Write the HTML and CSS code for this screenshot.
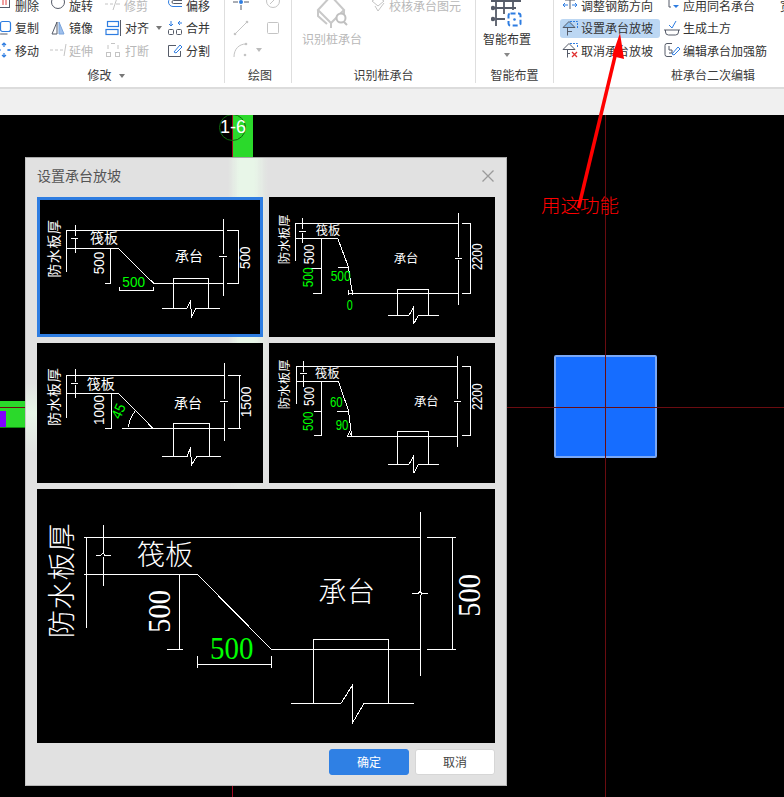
FILE: index.html
```html
<!DOCTYPE html>
<html lang="zh-CN">
<head>
<meta charset="utf-8">
<title>设置承台放坡</title>
<link rel="stylesheet" href="styles.css">
</head>
<body>
<div class="app">
  <header class="ribbon">
    <section class="group g-edit">
      <div class="tools">
        <div class="tool"><svg class="ic" viewBox="0 0 16 16"><rect x="2.5" y="-1.5" width="11" height="12" fill="none" stroke="#555b68"/><path d="M7 2v6M10 2v6" stroke="#e04040" fill="none"/></svg><span>删除</span></div>
        <div class="tool"><svg class="ic" viewBox="0 0 16 16"><circle cx="8" cy="5" r="6.5" fill="none" stroke="#555b68"/></svg><span>旋转</span></div>
        <div class="tool off"><svg class="ic" viewBox="0 0 16 16"><path d="M0 7h3M5 7h3M11 7h4M12 1 8 13" fill="none" stroke="#c4c4c4"/></svg><span>修剪</span></div>
        <div class="tool"><svg class="ic" viewBox="0 0 16 16"><path d="M15 .5H6a4.500 4.500 0 0 0 0 9h9" fill="none" stroke="#2e7de1"/><path d="M15 3.500H6.500a1.500 1.500 0 0 0 0 3H15" fill="none" stroke="#555b68"/></svg><span>偏移</span></div>

        <div class="tool"><svg class="ic" viewBox="0 0 16 16"><rect x="4.500" y="1.500" width="10" height="10" rx="2" fill="none" stroke="#2e7de1" stroke-width="1.200"/><path d="M2.500 5v7a2 2 0 0 0 2 2h7" fill="none" stroke="#555b68"/></svg><span>复制</span></div>
        <div class="tool"><svg class="ic" viewBox="0 0 16 16"><path d="M7 2 2 14h5z" fill="none" stroke="#555b68"/><path d="M9 2l5 12H9z" fill="#9fc0ec" stroke="#7aa4dc"/></svg><span>镜像</span></div>
        <div class="tool"><svg class="ic tight" viewBox="0 0 16 16"><rect x="2.500" y="1.500" width="11" height="5" fill="none" stroke="#2e7de1" stroke-width="1.200"/><rect x="1" y="9.500" width="12" height="5" fill="none" stroke="#2e7de1" stroke-width="1.200"/><path d="M15.500 0v16" stroke="#555b68"/></svg><span>对齐</span><i class="caret caret-near"></i></div>
        <div class="tool"><svg class="ic" viewBox="0 0 16 16"><path d="M4 1v5M2 4l2 2 2-2M11 3h4M11 3l2-2M11 3l2 2" fill="none" stroke="#2e7de1"/><rect x="1.500" y="9.500" width="5" height="5" rx="1" fill="none" stroke="#555b68"/><rect x="9.500" y="9.500" width="5" height="5" rx="1" fill="none" stroke="#555b68"/></svg><span>合并</span></div>

        <div class="tool"><svg class="ic" viewBox="0 0 16 16"><path d="M8 1v4M8 11v4M1 8h4M11 8h4M6 3l2-2 2 2M6 13l2 2 2-2" fill="none" stroke="#2e7de1" stroke-width="1.200"/><circle cx="3" cy="8" r="1" fill="#2e7de1"/><circle cx="13" cy="8" r="1" fill="#2e7de1"/></svg><span>移动</span></div>
        <div class="tool off"><svg class="ic" viewBox="0 0 16 16"><path d="M0 8h3M5 8h3M10 8h3M16 2l-2 12" fill="none" stroke="#c4c4c4"/></svg><span>延伸</span></div>
        <div class="tool off"><svg class="ic" viewBox="0 0 16 16"><path d="M3 3v4M13 3v4M6 1.500h4" fill="none" stroke="#c4c4c4"/><rect x="1.500" y="10.500" width="4" height="4" fill="none" stroke="#c4c4c4"/><rect x="10.500" y="10.500" width="4" height="4" fill="none" stroke="#c4c4c4"/></svg><span class="far">打断</span></div>
        <div class="tool"><svg class="ic" viewBox="0 0 16 16"><path d="M9 3.500H1.500v11h12V9" fill="none" stroke="#555b68"/><path d="M7 10 13 3l2 2-6 6z" fill="none" stroke="#2e7de1"/></svg><span>分割</span></div>
      </div>
      <div class="group-label label-edit">修改<i class="caret"></i></div>
    </section>

    <section class="group g-draw">
      <div class="tools">
        <div class="tool"><svg class="ic" viewBox="0 0 16 16"><path d="M0 5h5M11 5h5M8 -2v4M8 8v5" fill="none" stroke="#555b68"/><circle cx="8" cy="5" r="2" fill="#2e7de1"/></svg></div>
        <div class="tool"><svg class="ic" viewBox="0 0 16 16"><circle cx="8" cy="4" r="6.500" fill="none" stroke="#c4c4c4"/><path d="M5 7l6-6" stroke="#c4c4c4"/></svg></div>
        <div class="tool"><svg class="ic" viewBox="0 0 16 16"><path d="M2 14 14 2" stroke="#c4c4c4"/><circle cx="2" cy="14" r="1.300" fill="#c4c4c4"/><circle cx="14" cy="2" r="1.300" fill="#c4c4c4"/></svg></div>
        <div class="tool"><svg class="ic" viewBox="0 0 16 16"><rect x="2.500" y="2.500" width="11" height="11" rx="1" fill="none" stroke="#c4c4c4"/></svg></div>
        <div class="tool tool-wide"><svg class="ic" viewBox="0 0 16 16"><path d="M1 15C1 7 6 2 13 2" fill="none" stroke="#c4c4c4"/><circle cx="13" cy="2" r="1.300" fill="#c4c4c4"/><circle cx="12" cy="13" r="1.300" fill="#c4c4c4"/></svg><i class="caret caret-off"></i></div>
      </div>
      <div class="group-label label-draw">绘图</div>
    </section>

    <section class="group g-detect">
      <div class="detect-row">
        <div class="big off">
          <svg class="big-ic" viewBox="0 0 32 30"><path d="M2 12 15 -2l13 14-13 13zM2 12v6l9 8M15 25v5M28 12v4" fill="none" stroke="#c8c8c8" stroke-width="2"/><circle cx="25" cy="20" r="4.500" fill="#fff" stroke="#c0c0c0" stroke-width="2"/><path d="M28 24l3 3" stroke="#c0c0c0" stroke-width="2"/></svg>
          <span>识别桩承台</span>
        </div>
        <div class="tool off check-tool"><svg class="ic" viewBox="0 0 16 16"><path d="M2 4 8 0l6 4-6 5zM5 9l3 5 6-8" fill="none" stroke="#c4c4c4"/></svg><span>校核承台图元</span></div>
      </div>
      <div class="group-label">识别桩承台</div>
    </section>

    <section class="group g-smart">
      <div class="big smart">
        <svg class="big-ic" viewBox="0 0 32 30"><path d="M5 0v28M5 21h9M13 0v16M0 10h25M22 0v12M0 3h30" fill="none" stroke="#555b68" stroke-width="1.800" /><circle cx="2" cy="10" r="2.200" fill="#555b68"/><circle cx="2" cy="21" r="2.200" fill="#555b68"/><rect x="17.500" y="15.500" width="12" height="12" rx="2" fill="#fff" stroke="#2e7de1" stroke-width="2" stroke-dasharray="5 2.500"/><circle cx="23.500" cy="21.500" r="1.300" fill="#2e7de1"/></svg>
        <span>智能布置</span>
        <i class="caret smart-caret"></i>
      </div>
      <div class="group-label">智能布置</div>
    </section>

    <section class="group g-cap">
      <div class="tools">
        <div class="tool"><svg class="ic" viewBox="0 0 16 16"><path d="M3 3V1M13 3V1M8 0v12M3 3h10" fill="none" stroke="#555b68"/><path d="M1 8h5M10 8h5M3 6 1 8l2 2M13 6l2 2-2 2" fill="none" stroke="#2e7de1"/></svg><span>调整钢筋方向</span></div>
        <div class="tool"><svg class="ic" viewBox="0 0 16 16"><path d="M1 1h14M5 1v9h2" fill="none" stroke="#555b68"/><path d="M9 8h6l-3 3z" fill="#2e7de1"/></svg><span>应用同名承台</span></div>
        <div class="tool"><svg class="ic" viewBox="0 0 16 16"><path d="M8 1.500H15.500V8" fill="none" stroke="#2e7de1" stroke-dasharray="2 1"/><path d="M1 7.500 7 1.500l6 6z" fill="#8fc0ef" stroke="#555b68"/><path d="M5.500 7.500V15.500M5.500 11.500H10" fill="none" stroke="#555b68"/></svg><span>设置承台放坡</span></div>
        <div class="tool"><svg class="ic" viewBox="0 0 16 16"><path d="M1.500 10v2a3 3 0 0 0 3 3h7a3 3 0 0 0 3-3v-2M0 10h16" fill="none" stroke="#555b68"/><path d="M5 5l3 3 4-7" fill="none" stroke="#2e7de1"/></svg><span>生成土方</span></div>
        <div class="tool"><svg class="ic" viewBox="0 0 16 16"><path d="M8 1.500H15.500V6" fill="none" stroke="#2e7de1" stroke-dasharray="2 1"/><path d="M1 7.500 7 1.500l6 6zM5.500 7.500V15.500M5.500 11.500H8" fill="none" stroke="#555b68"/><path d="M10 10l5 5M15 10l-5 5" stroke="#e03030" stroke-width="1.300"/></svg><span>取消承台放坡</span></div>
        <div class="tool"><svg class="ic" viewBox="0 0 16 16"><path d="M8 1.500H3a2 2 0 0 0-2 2v9a2 2 0 0 0 2 2h5M5 4v4h3v3H5" fill="none" stroke="#555b68"/><path d="M8 12 14 5l2 2-6 6z" fill="none" stroke="#2e7de1"/></svg><span>编辑承台加强筋</span></div>
        <div class="tool tool-clip"><span>宽</span></div>
      </div>
      <div class="group-label label-cap">桩承台二次编辑</div>
    </section>
  </header>

  <div class="strip"></div>

  <main class="canvas">
    <div class="stripe-top"></div>
    <div class="v-line"></div>
    <div class="axis-badge">1-6</div>
    <div class="stripe-left"><div class="stripe-purple"></div></div>
    <div class="pile-cap"></div>
    <div class="cross-h"></div>
    <div class="cross-v"></div>
    <div class="note">用这功能</div>

    <div class="dialog">
      <div class="dialog-head">
        <span class="dialog-title">设置承台放坡</span>
        <svg class="close" viewBox="0 0 12 12"><path d="M.5.500l11 11M11.500.500l-11 11" fill="none" stroke="#9a9a9a" stroke-width="1.300"/></svg>
      </div>
      <div class="panels">
        <div class="panel selected">
          <svg class="cad" viewBox="36 126 678 420">
            <path class="ln" d="M150 227H595M595 192V298M595 308V422M583 304H607M605 227H643M605 384H643M640 227V384M150 210V243M150 253V295M138 249H160M122 227H150M122 280H280M125 227V352M256 280V384H240M385 384H595M282 395V408M282 406H385M385 395V408M445 460V370H550V460M412 460H486L497 436L499 488L513 460H585"/>
            <path class="ln" d="M280 280 385 384"/>
            <text class="cn" x="195" y="263">筏板</text><text class="cn" x="450" y="317">承台</text>
            <text class="cn" transform="rotate(-90 103 368)" x="103" y="368" textLength="173">防水板厚</text>
            <text class="num" transform="rotate(-90 238 358)" x="238" y="358" textLength="68" lengthAdjust="spacingAndGlyphs">500</text>
            <text class="num" transform="rotate(-90 675 342)" x="675" y="342" textLength="68" lengthAdjust="spacingAndGlyphs">500</text>
            <text class="num green" x="292" y="396" textLength="68" lengthAdjust="spacingAndGlyphs">500</text>
          </svg>
        </div>
        <div class="panel">
          <svg class="cad" viewBox="12 126 678 420">
            <path class="ln" d="M112 205H580M580 175V305M580 315V450M570 310H590M592 205H617M592 415H617M615 205V415M112 190V223M112 233V265M102 228H122M92 205H112M92 250H218M92 205V318M168 250V415H145M120 340H170M218 338H250M250 415H580M250 405V420M262 405V420M397 481V403H490V481M370 481H432L445 458L447 505L460 481H522"/>
            <path class="ln" d="M218 250 250 335 262 415"/>
            <text class="cn s" x="152" y="241">筏板</text><text class="cn s" x="386" y="325">承台</text>
            <text class="cn s" transform="rotate(-90 73 328)" x="73" y="328" textLength="150">防水板厚</text>
            <text class="num" transform="rotate(-90 148 328)" x="148" y="328" textLength="60" lengthAdjust="spacingAndGlyphs">500</text>
            <text class="num green" transform="rotate(-90 145 397)" x="145" y="397" textLength="60" lengthAdjust="spacingAndGlyphs">500</text>
            <text class="num" transform="rotate(-90 652 345)" x="652" y="345" textLength="80" lengthAdjust="spacingAndGlyphs">2200</text>
            <text class="num green" x="197" y="378" textLength="60" lengthAdjust="spacingAndGlyphs">500</text>
            <text class="num green" x="245" y="465" textLength="18" lengthAdjust="spacingAndGlyphs">0</text>
          </svg>
        </div>
        <div class="panel">
          <svg class="cad" viewBox="36 9 678 420">
            <path class="ln" d="M150 105H598M598 70V178M598 188V302M586 184H610M610 105H647M610 265H647M644 105V265M150 88V125M150 135V175M138 130H160M122 105H150M122 160H280M125 105V235M258 160V265H240M292 265H598M445 350V250H553V350M412 350H486L497 322L499 376L515 350H588"/>
            <path class="ln" d="M280 160 384 265M311 262A74 74 0 0 1 330 215"/>
            <text class="cn" x="185" y="146">筏板</text><text class="cn" x="447" y="203">承台</text>
            <text class="cn" transform="rotate(-90 103 258)" x="103" y="258" textLength="173">防水板厚</text>
            <text class="num" transform="rotate(-90 238 255)" x="238" y="255" textLength="90" lengthAdjust="spacingAndGlyphs">1000</text>
            <text class="num" transform="rotate(-90 678 232)" x="678" y="232" textLength="92" lengthAdjust="spacingAndGlyphs">1500</text>
            <text class="num green" transform="rotate(-65 285 240)" x="285" y="240" textLength="44" lengthAdjust="spacingAndGlyphs">45</text>
          </svg>
        </div>
        <div class="panel">
          <svg class="cad" viewBox="12 9 678 420">
            <path class="ln" d="M115 79H577M577 48V178M577 188V320M567 183H587M592 79H617M592 287H617M615 79V287M116 62V95M116 105V140M106 100H126M92 79H116M92 124H220M94 79V192M170 124V287H147M147 214H170M215 214H250M247 288H577M397 373V274H490V373M397 288H490M370 373H432L445 350L447 398L460 373H522M247 288 254 276 260 288"/>
            <path class="ln" d="M220 124 250 210 260 287"/>
            <text class="cn s" x="150" y="113">筏板</text><text class="cn s" x="447" y="198">承台</text>
            <text class="cn s" transform="rotate(-90 73 208)" x="73" y="208" textLength="150">防水板厚</text>
            <text class="num" transform="rotate(-90 146 198)" x="146" y="198" textLength="58" lengthAdjust="spacingAndGlyphs">500</text>
            <text class="num green" transform="rotate(-90 145 273)" x="145" y="273" textLength="58" lengthAdjust="spacingAndGlyphs">500</text>
            <text class="num" transform="rotate(-90 652 210)" x="652" y="210" textLength="80" lengthAdjust="spacingAndGlyphs">2200</text>
            <text class="num green" x="195" y="200" textLength="38" lengthAdjust="spacingAndGlyphs">60</text>
            <text class="num green" x="212" y="270" textLength="38" lengthAdjust="spacingAndGlyphs">90</text>
          </svg>
        </div>
        <div class="panel panel-wide">
          <svg class="cad" viewBox="21 -3 1374 762">
            <path class="ln" d="M220 142H1171M1171 67V305M1171 315V557M1147 312L1164 311L1171 303L1175 312L1193 311M1191 142H1277M1191 478H1277M1268 142V478M220 105V190M220 200V287M198 196L214 195L220 187L224 196L243 195M163 142H220M163 254H503M169 142V415M449 254V478M411 478H459M503 499V533M503 523H724M724 499V533M724 478H1171M850 640V448H1075V640M783 640H933L967 586L968 698L1002 640H1152"/>
            <path class="ln" d="M503 254 724 478"/>
            <text class="cn l" x="320" y="225">筏板</text><text class="cn l" x="865" y="337">承台</text>
            <text class="cn l" transform="rotate(-90 125 445)" x="125" y="445" textLength="345">防水板厚</text>
            <text class="num big-num" transform="rotate(-90 420 428)" x="420" y="428" textLength="128" lengthAdjust="spacingAndGlyphs">500</text>
            <text class="num big-num" transform="rotate(-90 1350 380)" x="1350" y="380" textLength="128" lengthAdjust="spacingAndGlyphs">500</text>
            <text class="num big-num green" x="540" y="507" textLength="130" lengthAdjust="spacingAndGlyphs">500</text>
          </svg>
        </div>
      </div>
      <div class="dialog-foot">
        <button class="btn primary" type="button">确定</button>
        <button class="btn" type="button">取消</button>
      </div>
    </div>
  </main>

  <svg class="arrow" viewBox="0 0 784 797"><path d="M578.500 208 616 52" fill="none" stroke="#f00" stroke-width="3.500"/><path d="M620 33 624 59 612 56z" fill="#f00"/></svg>
</div>
</body>
</html>
```

FILE: styles.css
```css
* { box-sizing: border-box; }
html, body { margin: 0; padding: 0; background: #000; }
body { font-family: "Noto Sans CJK SC", "Liberation Sans", sans-serif; }

.app { position: relative; width: 784px; height: 797px; overflow: hidden; display: flex; flex-direction: column; }

/* ribbon */
.ribbon { flex: 0 0 89px; display: flex; background: #fff; border-bottom: 2px solid #dcdcdc; overflow: hidden; }
.group { position: relative; min-width: 0; height: 83px; display: flex; flex-direction: column; border-right: 1px solid #dedede; font-size: 12px; color: #333; }
.g-edit { flex: 0 0 225px; }
.g-draw { flex: 0 0 67px; }
.g-detect { flex: 0 0 184px; }
.g-smart { flex: 0 0 78px; }
.g-cap { flex: 1; border-right: 0; }

.tools { display: grid; grid-auto-rows: 22.5px; margin-top: -6px; }
.g-edit .tools { grid-template-columns: 54px 55px 62px 1fr; margin-left: -4px; }
.g-draw .tools { grid-template-columns: 32px 32px; padding-left: 8px; }
.g-cap .tools { grid-template-columns: 102px 116px 20px; padding-left: 8px; }
.g-cap .tool:nth-child(odd) { grid-column: 1; }
.g-cap .tool:nth-child(even) { grid-column: 2; }
.g-cap .tool.tool-clip { grid-column: 3; grid-row: 1; }

.tool { display: flex; align-items: center; gap: 3px; white-space: nowrap; line-height: 17px; height: 22.5px; }
.tool.off { color: #b8b8b8; }
.tool-wide { grid-column: span 2; gap: 7px; }
.ic { flex: 0 0 16px; width: 16px; height: 16px; overflow: visible; }
.ic.tight { margin-right: 1px; }
.far { margin-left: 1px; }

.g-cap .tool:nth-child(3) { position: relative; }
.g-cap .tool:nth-child(3)::before { content: ""; position: absolute; z-index: 0; left: -2px; top: 2px; width: 100px; height: 19px; border-radius: 3px; background: #bcd7f3; }
.g-cap .tool:nth-child(3) > * { position: relative; z-index: 1; }

.group-label { margin-top: auto; height: 17px; line-height: 17px; text-align: center; color: #3c3c3c; }
.label-edit { padding-right: 12px; }
.label-draw { padding-left: 4px; }
.label-cap { padding-left: 88px; }

.caret { display: inline-block; width: 0; height: 0; border-left: 3.5px solid transparent; border-right: 3.5px solid transparent; border-top: 4px solid #777; margin-left: 7px; vertical-align: 2px; }
.caret-near { margin-left: 4px; border-left-width: 3px; border-right-width: 3px; }
.caret-off { margin-left: 0; border-top-color: #bbb; }

.detect-row { display: flex; align-items: flex-start; padding-left: 10px; height: 0; flex: 1; }
.big { display: flex; flex-direction: column; align-items: center; white-space: nowrap; }
.big.off { color: #b8b8b8; width: 60px; margin-top: -2px; }
.big-ic { width: 32px; height: 30px; flex: 0 0 30px; overflow: hidden; }
.big > span { height: 20px; line-height: 20px; margin-top: 1px; }
.check-tool { margin: -6px 0 0 8px; }
.smart { margin-top: -2px; padding-right: 15px; }
.smart-caret { margin: 4px 0 0 0; border-top-color: #888; }

.strip { flex: 0 0 26px; background: #f0f0f0; }

/* canvas */
.canvas { position: relative; flex: 1; background: #000; overflow: hidden; }
.stripe-top { position: absolute; left: 232px; top: 0; width: 21px; height: 60px; background: #2bd92b; }
.v-line { position: absolute; left: 232px; top: 0; bottom: 0; width: 1px; background: #a00a24; }
.axis-badge { position: absolute; left: 219px; top: -1px; width: 27px; height: 27px; border-radius: 50%; border: 1px solid #0d6a0d; color: #fff; font: 18px/25px "Liberation Sans", sans-serif; text-align: center; white-space: nowrap; }
.stripe-left { position: absolute; left: 0; top: 286px; width: 30px; height: 27px; background: #2bd92b; border-bottom: 1px solid #0d8a0d; }
.stripe-purple { position: absolute; left: 0; bottom: 0; width: 6px; height: 16px; background: #8000ff; }
.pile-cap { position: absolute; left: 554px; top: 240px; width: 103px; height: 103px; background: #166dff; border: 2px solid #7aa8f5; border-radius: 2px; }
.cross-h { position: absolute; left: 0; right: 0; top: 292px; height: 1px; background: #6a0c10; }
.cross-v { position: absolute; left: 605px; top: 0; bottom: 0; width: 1px; background: #6a0c10; }
.note { position: absolute; left: 541px; top: 78px; font: 19.5px/24px "Noto Sans CJK SC", sans-serif; font-weight: 300; color: #f00; white-space: nowrap; }

/* dialog */
.dialog { position: absolute; left: 25px; top: 42px; width: 482px; height: 629px; padding: 0 12px; display: flex; flex-direction: column; border: 1px solid #b5b5b5; border-left-color: #c8c8c8; border-top-color: #a8a8a8;
  background:
    linear-gradient(180deg, rgba(232,246,232,0) 225px, #e8f6e8 255px, rgba(232,246,232,0) 295px) 0 0 / 12px 100% no-repeat,
    #e1e1e1; }
.dialog::before { content: ""; position: absolute; left: 202px; top: 0; width: 40px; height: 345px;
  background: linear-gradient(90deg, rgba(232,246,232,0), #e8f6e8 28%, #e8f6e8 65%, rgba(232,246,232,0));
  -webkit-mask-image: linear-gradient(180deg, #000 60%, transparent); mask-image: linear-gradient(180deg, #000 60%, transparent); }
.dialog-head { position: relative; flex: 0 0 39px; padding-bottom: 6px; display: flex; align-items: center; justify-content: space-between; }
.dialog-title { font-size: 14px; line-height: 20px; color: #555; margin-left: -1px; }
.close { width: 12px; height: 12px; margin-top: 2px; }
.panels { position: relative; display: grid; grid-template-columns: 226px 226px; grid-template-rows: 140px 140px 254px; gap: 6px; margin-left: -1px; }
.panel { position: relative; background: #000; }
.panel-wide { grid-column: span 2; }
.panel.selected { outline: 3px solid #2e7de1; outline-offset: -3px; }
.cad { display: block; width: 100%; height: 100%; }
.ln { fill: none; stroke: #fff; stroke-width: 3; shape-rendering: crispEdges; }
.cn { fill: #fff; font-family: "Noto Sans CJK SC", sans-serif; font-weight: 400; font-size: 42px; }
.cn.s { font-size: 37px; }
.cn.l { font-size: 85px; font-weight: 300; }
.num { fill: #fff; font-family: "Liberation Sans", sans-serif; font-size: 44px; }
.big-num { font-family: "Liberation Serif", serif; font-size: 96px; }
.green { fill: #0f0; }
.dialog-foot { position: relative; margin: 6px -1px 0 0; display: flex; justify-content: flex-end; gap: 6px; }
.btn { width: 80px; height: 26px; padding: 0; font: 12px/24px "Noto Sans CJK SC", sans-serif; color: #444; background: #fff; border: 1px solid #d6d6d6; border-radius: 3px; }
.btn.primary { color: #fff; background: #2f80e4; border-color: #2f80e4; }

.arrow { position: absolute; left: 0; top: 0; width: 784px; height: 797px; pointer-events: none; }
```
